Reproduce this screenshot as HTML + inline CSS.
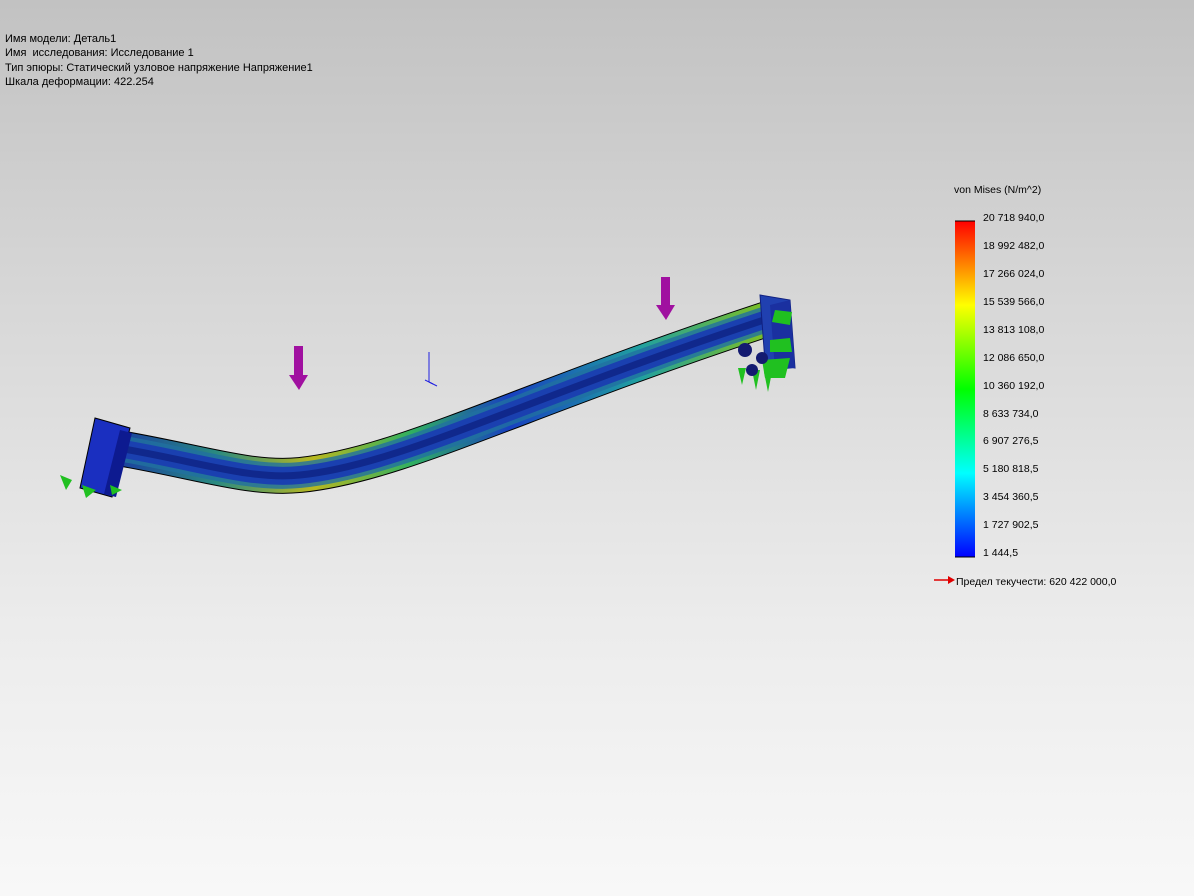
<!DOCTYPE html>
<html><head><meta charset="utf-8"><style>
html,body{margin:0;padding:0}
body{width:1194px;height:896px;overflow:hidden;background:linear-gradient(#c2c2c2 0%,#d8d8d8 35%,#ececec 70%,#f8f8f8 100%);font-family:"Liberation Sans",sans-serif;position:relative}
.info{position:absolute;left:5px;top:32px;font-size:11px;line-height:14.3px;color:#000}
.t{position:absolute;font-size:10.5px;color:#000;white-space:nowrap}
</style></head><body>
<div class="info">Имя модели: Деталь1<br>Имя&nbsp; исследования: Исследование 1<br>Тип эпюры: Статический узловое напряжение Напряжение1<br>Шкала деформации: 422.254</div>
<svg width="1194" height="896" style="position:absolute;left:0;top:0">
<defs>
<linearGradient id="cb" x1="0" y1="0" x2="0" y2="1">
<stop offset="0" stop-color="#ff0000"/><stop offset="0.25" stop-color="#ffff00"/><stop offset="0.5" stop-color="#00ff00"/><stop offset="0.75" stop-color="#00ffff"/><stop offset="1" stop-color="#0000ff"/>
</linearGradient>
<linearGradient id="ol" x1="118" y1="0" x2="770" y2="0" gradientUnits="userSpaceOnUse">
<stop offset="0" stop-color="#1a3fa0"/><stop offset="0.15" stop-color="#2a8a80"/><stop offset="0.3" stop-color="#b8b820"/><stop offset="0.45" stop-color="#30b060"/><stop offset="0.6" stop-color="#1840c0"/><stop offset="0.8" stop-color="#20a0a0"/><stop offset="1" stop-color="#80c020"/>
</linearGradient>
</defs>
<path d="M118,448 C200,462 250,480 300,475 C400,465 520,400 770,318" fill="none" stroke="#000" stroke-width="36"/>
<path d="M118,448 C200,462 250,480 300,475 C400,465 520,400 770,318" fill="none" stroke="url(#ol)" stroke-width="34"/>
<path d="M118,448 C200,462 250,480 300,475 C400,465 520,400 770,318" fill="none" stroke="#2070a0" stroke-width="26" opacity="0.8"/>
<path d="M118,448 C200,462 250,480 300,475 C400,465 520,400 770,318" fill="none" stroke="#1a40b0" stroke-width="18"/>
<path d="M118,448 C200,462 250,480 300,475 C400,465 520,400 770,318" fill="none" stroke="#10288c" stroke-width="7"/>
<polygon points="95,418 130,428 112,497 80,488" fill="#1a2fc0" stroke="#000" stroke-width="1"/>
<polygon points="120,430 132,433 116,497 104,494" fill="#0d1a90"/>
<polygon points="760,295 790,300 795,368 765,362" fill="#2040b0" stroke="#102080"/>
<polygon points="770,305 790,300 795,368 775,370" fill="#1a30a0"/>
<g fill="#20c020">
<polygon points="775,310 792,312 790,325 772,322"/><polygon points="770,340 790,338 792,352 770,352"/><polygon points="762,360 790,358 785,378 765,378"/>
<polygon points="60,475 72,480 66,490"/><polygon points="82,485 96,490 86,498"/><polygon points="110,485 122,490 112,495"/>
<polygon points="738,368 746,368 742,385"/><polygon points="752,370 760,370 756,390"/><polygon points="764,372 772,372 768,392"/>
</g>
<g fill="#141a70"><circle cx="745" cy="350" r="7"/><circle cx="752" cy="370" r="6"/><circle cx="762" cy="358" r="6"/></g>
<g fill="#a010a0">
<rect x="294" y="346" width="9" height="30"/><polygon points="289,375 308,375 299,390"/>
<rect x="661" y="277" width="9" height="30"/><polygon points="656,305 675,305 666,320"/>
</g>
<g stroke="#2020e0" fill="none" stroke-width="1"><line x1="429" y1="352" x2="429" y2="382"/><line x1="429" y1="382" x2="437" y2="386"/><line x1="425" y1="380" x2="433" y2="384"/></g>
<rect x="955" y="221" width="20" height="336" fill="url(#cb)"/>
<line x1="955" y1="221" x2="975" y2="221" stroke="#000"/><line x1="955" y1="557" x2="975" y2="557" stroke="#000"/>
<line x1="934" y1="580" x2="950" y2="580" stroke="#e00000" stroke-width="1.5"/><polygon points="948,576 955,580 948,584" fill="#e00000"/>
</svg>
<div class="t" style="left:954px;top:184px">von Mises (N/m^2)</div>
<div class="t" style="left:983px;top:212px">20 718 940,0</div>
<div class="t" style="left:983px;top:240px">18 992 482,0</div>
<div class="t" style="left:983px;top:268px">17 266 024,0</div>
<div class="t" style="left:983px;top:296px">15 539 566,0</div>
<div class="t" style="left:983px;top:324px">13 813 108,0</div>
<div class="t" style="left:983px;top:352px">12 086 650,0</div>
<div class="t" style="left:983px;top:380px">10 360 192,0</div>
<div class="t" style="left:983px;top:408px">8 633 734,0</div>
<div class="t" style="left:983px;top:435px">6 907 276,5</div>
<div class="t" style="left:983px;top:463px">5 180 818,5</div>
<div class="t" style="left:983px;top:491px">3 454 360,5</div>
<div class="t" style="left:983px;top:519px">1 727 902,5</div>
<div class="t" style="left:983px;top:547px">1 444,5</div>
<div class="t" style="left:956px;top:576px">Предел текучести: 620 422 000,0</div>
</body></html>
